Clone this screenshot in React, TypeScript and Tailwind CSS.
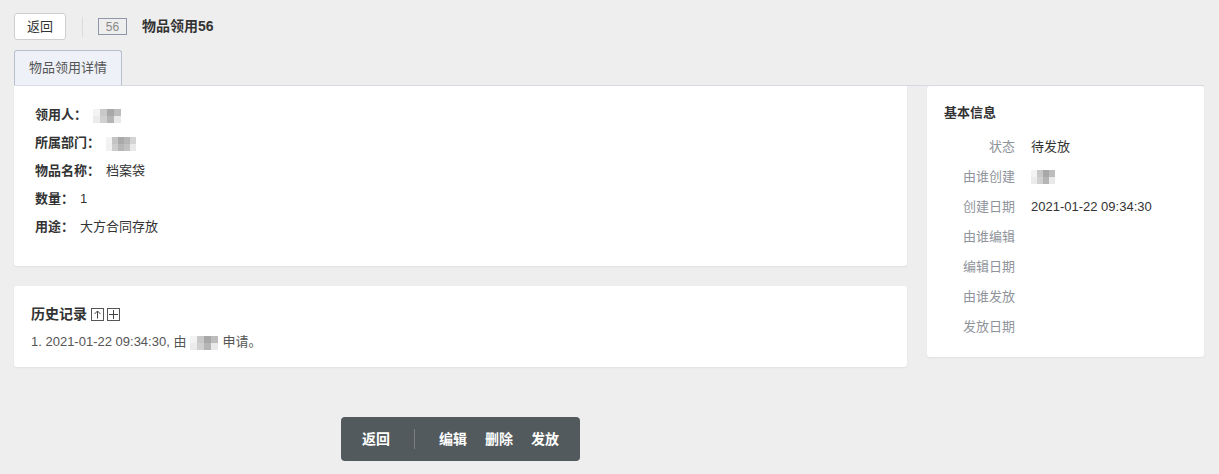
import React from "react";

const Blur = ({ w = 28, variant = 0 }: { w?: number; variant?: number }) => {
  const patterns = [
    ["#e8e8e8", "#c8c8c8", "#a8a8a8", "#bdbdbd"],
    ["#eeeeee", "#c4c4c4", "#a9a9a9", "#b6b6b6", "#d4d4d4"],
  ];
  const p = patterns[variant % patterns.length];
  const cw = w / p.length;
  return (
    <span className="inline-flex flex-col align-middle" style={{ width: w }}>
      <span className="flex h-[7px]">
        {p.map((c, i) => (
          <span key={i} style={{ width: cw, background: i === 0 ? "#f3f3f3" : c }} />
        ))}
      </span>
      <span className="flex h-[7px]">
        {p.map((c, i) => (
          <span key={i} style={{ width: cw, background: i === p.length - 1 ? "#e5e5e5" : c, opacity: 0.85 }} />
        ))}
      </span>
    </span>
  );
};

export default function App() {
  const font = { fontFamily: '"Liberation Sans", "Noto Sans CJK SC", sans-serif' };
  const leftRows: [string, React.ReactNode][] = [
    ["领用人：", <Blur w={28} />],
    ["所属部门：", <Blur w={30} variant={1} />],
    ["物品名称：", "档案袋"],
    ["数量：", "1"],
    ["用途：", "大方合同存放"],
  ];
  const rightRows: [string, React.ReactNode][] = [
    ["状态", "待发放"],
    ["由谁创建", <Blur w={24} />],
    ["创建日期", "2021-01-22 09:34:30"],
    ["由谁编辑", ""],
    ["编辑日期", ""],
    ["由谁发放", ""],
    ["发放日期", ""],
  ];
  return (
    <div className="min-h-[474px] w-full bg-[#eeeeee] pl-[14px] pr-[15px] pt-[13px] text-[13px] text-[#333]" style={font}>
      {/* header */}
      <div className="flex h-[27px] items-center">
        <button className="h-[27px] w-[52px] rounded-[3px] border border-[#cfcfcf] bg-white text-[13px] text-[#333]">返回</button>
        <div className="ml-[16px] h-[20px] w-px bg-[#dcdcdc]" />
        <span className="ml-[15px] flex h-[17px] w-[29px] items-center justify-center border border-[#8d97a8] text-[12px] leading-none text-[#888]">56</span>
        <span className="ml-[15px] text-[14px] font-bold text-[#333]">物品领用56</span>
      </div>
      {/* tabs */}
      <div className="mt-[10px] flex border-b border-[#d6dae3]">
        <div className="flex h-[35px] w-[108px] items-center justify-center rounded-t-[3px] border border-b-0 border-[#b7bfcd] bg-[#eef1f7] text-[13px] text-[#555]">物品领用详情</div>
      </div>
      <div className="flex gap-[20px]">
        <div className="flex w-[893px] flex-col">
          <div className="flex h-[180px] flex-col rounded-b-[3px] bg-white px-[21px] pt-[15px] shadow-[0_1px_2px_rgba(0,0,0,0.06)]">
            {leftRows.map(([k, v], i) => (
              <div key={i} className="flex h-[28px] items-center">
                <span className="font-bold text-[#333]">{k}</span>
                <span className="ml-[6px] text-[#333]">{v}</span>
              </div>
            ))}
          </div>
          <div className="mt-[20px] h-[81px] rounded-[3px] bg-white px-[17px] pt-[18px] shadow-[0_1px_2px_rgba(0,0,0,0.06)]">
            <div className="flex items-center">
              <span className="text-[14px] font-bold text-[#333]">历史记录</span>
              <span className="ml-[4px] flex h-[13px] w-[13px] items-center justify-center border border-[#555]">
                <svg width="9" height="9" viewBox="0 0 9 9" fill="none" stroke="#444" strokeWidth="1">
                  <path d="M4.5 8.5V1M1.5 4L4.5 1L7.5 4" />
                </svg>
              </span>
              <span className="ml-[3px] flex h-[13px] w-[13px] items-center justify-center border border-[#555]">
                <svg width="9" height="9" viewBox="0 0 9 9" fill="none" stroke="#444" strokeWidth="1">
                  <path d="M4.5 0V9M0 4.5H9" />
                </svg>
              </span>
            </div>
            <div className="mt-[7px] flex items-center text-[13px] text-[#555]">
              <span>1. 2021-01-22 09:34:30, 由</span>
              <span className="mx-[4px]"><Blur w={28} /></span>
              <span>申请。</span>
            </div>
          </div>
          <div className="mt-[50px] flex h-[44px] w-[239px] items-center self-center rounded-[4px] bg-[#535a5d] text-[14px] font-bold text-white">
            <span className="ml-[21px]">返回</span>
            <span className="ml-[24px] h-[20px] w-px bg-[#7a8083]" />
            <span className="ml-[24px]">编辑</span>
            <span className="ml-[18px]">删除</span>
            <span className="ml-[18px]">发放</span>
          </div>
        </div>
        <div className="h-[271px] flex-1 rounded-[3px] bg-white px-[17px] pt-[17px] shadow-[0_1px_2px_rgba(0,0,0,0.06)]">
          <div className="text-[13px] font-bold text-[#333]">基本信息</div>
          <div className="mt-[9px]">
            {rightRows.map(([k, v], i) => (
              <div key={i} className="flex h-[30px] items-center">
                <span className="w-[71px] text-right text-[#8f949b]">{k}</span>
                <span className="ml-[16px] text-[#333]">{v}</span>
              </div>
            ))}
          </div>
        </div>
      </div>
    </div>
  );
}
